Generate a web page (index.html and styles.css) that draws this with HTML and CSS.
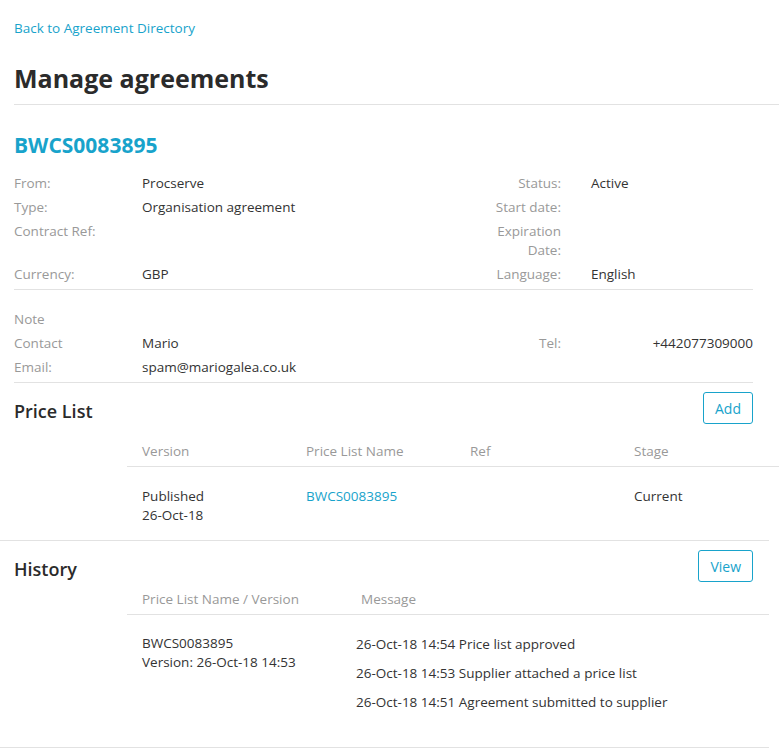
FILE: index.html
```html
<!DOCTYPE html>
<html lang="en">
<head>
<meta charset="utf-8">
<title>Manage agreements</title>
<link rel="stylesheet" href="styles.css">
</head>
<body>
<div class="page">
  <a class="back" href="#">Back to Agreement Directory</a>
  <h1 class="title">Manage agreements</h1>

  <div class="details">
    <h2 class="ref">BWCS0083895</h2>
    <div class="info">
      <span class="lbl">From:</span><span class="val">Procserve</span>
      <span class="lbl r">Status:</span><span class="val">Active</span>

      <span class="lbl">Type:</span><span class="val">Organisation agreement</span>
      <span class="lbl r">Start date:</span><span class="val"></span>

      <span class="lbl">Contract Ref:</span><span class="val"></span>
      <span class="lbl r">Expiration<br>Date:</span><span class="val"></span>

      <span class="lbl">Currency:</span><span class="val">GBP</span>
      <span class="lbl r">Language:</span><span class="val">English</span>
    </div>
    <div class="info contact">
      <span class="lbl">Note</span><span class="val"></span>
      <span class="lbl r"></span><span class="val"></span>

      <span class="lbl">Contact</span><span class="val">Mario</span>
      <span class="lbl r">Tel:</span><span class="val tel">+442077309000</span>

      <span class="lbl">Email:</span><span class="val">spam@mariogalea.co.uk</span>
      <span class="lbl r"></span><span class="val"></span>
    </div>
  </div>

  <section class="section">
    <div class="sec-head">
      <h3>Price List</h3>
      <button class="btn">Add</button>
    </div>
    <div class="table">
      <div class="thead pl">
        <span>Version</span><span>Price List Name</span><span>Ref</span><span>Stage</span>
      </div>
      <div class="tbody pl">
        <span>Published<br>26-Oct-18</span><span><a href="#">BWCS0083895</a></span><span></span><span>Current</span>
      </div>
    </div>
  </section>

  <section class="section history">
    <div class="sec-head">
      <h3>History</h3>
      <button class="btn">View</button>
    </div>
    <div class="table">
      <div class="thead hist">
        <span>Price List Name / Version</span><span>Message</span>
      </div>
      <div class="tbody hist">
        <span>BWCS0083895<br>Version: 26-Oct-18 14:53</span>
        <ul class="msgs">
          <li>26-Oct-18 14:54 Price list approved</li>
          <li>26-Oct-18 14:53 Supplier attached a price list</li>
          <li>26-Oct-18 14:51 Agreement submitted to supplier</li>
        </ul>
      </div>
    </div>
  </section>
</div>
</body>
</html>
```

FILE: styles.css
```css
* { box-sizing: border-box; }
html, body { margin: 0; padding: 0; background: #fff; }
body {
  font-family: "Open Sans", "Noto Sans", sans-serif;
  font-size: 13.5px;
  color: #333;
  line-height: 19px;
}
.page { width: 779px; }
a { color: #18a3cb; text-decoration: none; }
.back { display: inline-block; margin: 19px 0 0 14px; }
.title {
  margin: 22px 0 0 14px;
  padding-bottom: 8px;
  font-size: 25px;
  line-height: 36px;
  font-weight: 700;
  color: #2b2b2b;
  border-bottom: 1px solid #e2e2e2;
}
.details { margin: 0 26px 0 14px; }
.ref {
  margin: 26px 0 13px;
  font-size: 21px;
  line-height: 28px;
  font-weight: 700;
  color: #18a3cb;
}
.info {
  display: grid;
  grid-template-columns: 128px 329px 120px 162px;
  grid-auto-rows: minmax(24px, auto);
  border-bottom: 1px solid #e2e2e2;
  padding-bottom: 2px;
}
.info > span { padding: 2px 0 3px; }
.lbl { color: #999; }
.lbl.r { text-align: right; padding-right: 30px !important; }
.val.tel { text-align: right; }
.contact { padding: 18px 0 2px; }
.section { margin-right: 10px; border-bottom: 1px solid #e2e2e2; }
.sec-head {
  display: flex;
  justify-content: space-between;
  align-items: center;
  margin: 0 16px 0 14px;
  padding-top: 9px;
}
.sec-head h3 { margin: 0; font-size: 18px; font-weight: 600; color: #2b2b2b; line-height: 24px; padding-top: 6px; }
.btn {
  font: inherit;
  font-size: 14px;
  color: #18a3cb;
  background: #fff;
  border: 1px solid #18a3cb;
  border-radius: 3px;
  height: 32px;
  padding: 0 11px;
}
.table { margin-left: 127px; margin-right: -10px; }
.thead {
  display: grid;
  color: #999;
  border-bottom: 1px solid #e2e2e2;
  padding: 18px 0 5px;
}
.history .thead { margin-right: 10px; padding: 8px 0 5px; }
.thead span, .tbody > span { padding-left: 15px; }
.pl { grid-template-columns: 164px 164px 164px 1fr; }
.tbody { display: grid; padding: 20px 0 15px; }
.hist { grid-template-columns: 219px 1fr; }
.tbody.hist { padding: 19px 0 25px; }
.msgs { list-style: none; margin: 0; padding: 1px 0 0 10px; }
.msgs li { margin-bottom: 10px; }
```
